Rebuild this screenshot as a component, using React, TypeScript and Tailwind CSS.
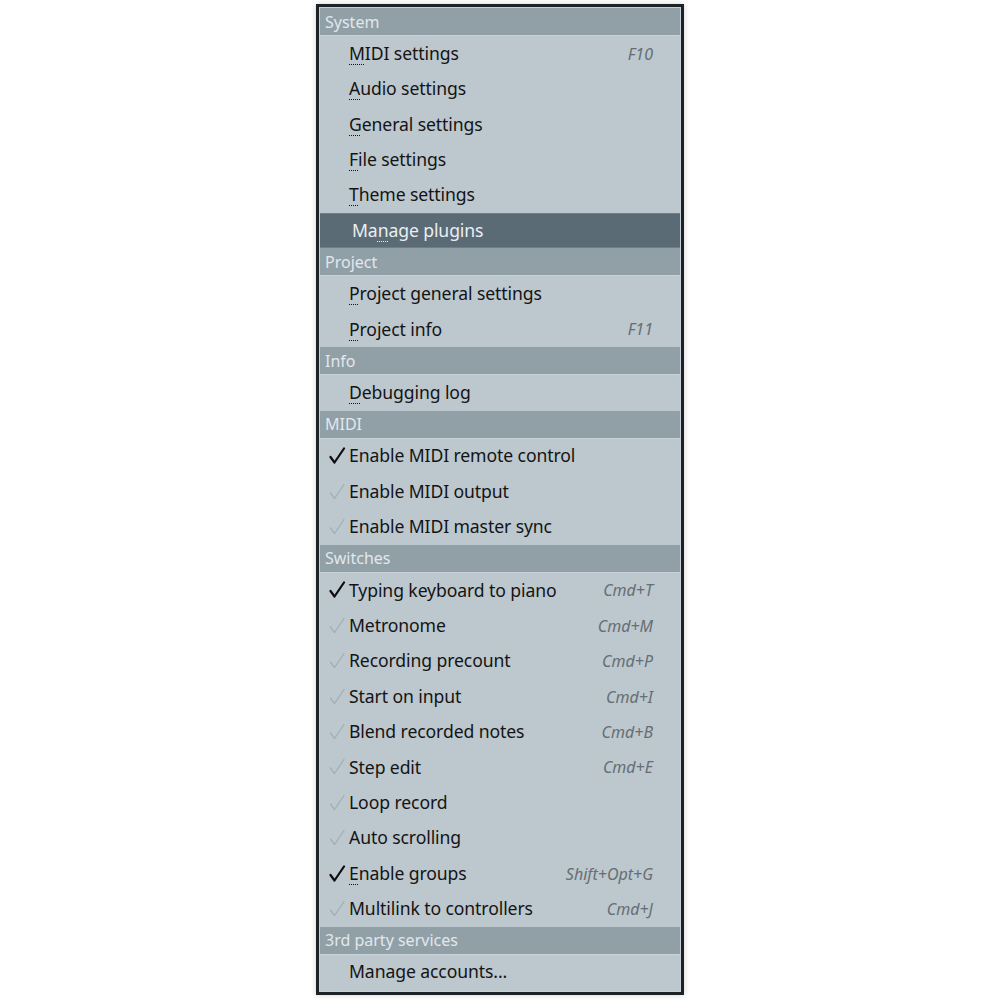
import React from 'react';

type Item = {
  label: string;
  key?: number; // index of mnemonic letter
  shortcut?: string;
  check?: 'on' | 'off';
  active?: boolean;
};

type Section = { title: string; items: Item[] };

const sections: Section[] = [
  {
    title: 'System',
    items: [
      { label: 'MIDI settings', key: 0, shortcut: 'F10' },
      { label: 'Audio settings', key: 0 },
      { label: 'General settings', key: 0 },
      { label: 'File settings', key: 0 },
      { label: 'Theme settings', key: 0 },
      { label: 'Manage plugins', key: 2, active: true },
    ],
  },
  {
    title: 'Project',
    items: [
      { label: 'Project general settings', key: 0 },
      { label: 'Project info', key: 0, shortcut: 'F11' },
    ],
  },
  { title: 'Info', items: [{ label: 'Debugging log', key: 0 }] },
  {
    title: 'MIDI',
    items: [
      { label: 'Enable MIDI remote control', check: 'on' },
      { label: 'Enable MIDI output', check: 'off' },
      { label: 'Enable MIDI master sync', check: 'off' },
    ],
  },
  {
    title: 'Switches',
    items: [
      { label: 'Typing keyboard to piano', check: 'on', shortcut: 'Cmd+T' },
      { label: 'Metronome', check: 'off', shortcut: 'Cmd+M' },
      { label: 'Recording precount', check: 'off', shortcut: 'Cmd+P' },
      { label: 'Start on input', check: 'off', shortcut: 'Cmd+I' },
      { label: 'Blend recorded notes', check: 'off', shortcut: 'Cmd+B' },
      { label: 'Step edit', check: 'off', shortcut: 'Cmd+E' },
      { label: 'Loop record', check: 'off' },
      { label: 'Auto scrolling', check: 'off' },
      { label: 'Enable groups', key: 0, check: 'on', shortcut: 'Shift+Opt+G' },
      { label: 'Multilink to controllers', check: 'off', shortcut: 'Cmd+J' },
    ],
  },
  { title: '3rd party services', items: [{ label: 'Manage accounts...' }] },
];

const Check = ({ on }: { on: boolean }) => (
  <svg width="17" height="18" viewBox="0 0 17 18" className="absolute left-[9px] top-1/2 -translate-y-1/2">
    <polyline
      points="1.5,10 5.5,15.5 15,1.5"
      fill="none"
      stroke={on ? '#0d0d0d' : '#a3aeb5'}
      strokeWidth={on ? 2.2 : 1.3}
      strokeLinecap="round"
      strokeLinejoin="round"
    />
  </svg>
);

const Label = ({ item }: { item: Item }) => {
  if (item.key === undefined) return <>{item.label}</>;
  const i = item.key;
  return (
    <>
      {item.label.slice(0, i)}
      <span className="underline decoration-dotted decoration-1 underline-offset-[4px]">{item.label[i]}</span>
      {item.label.slice(i + 1)}
    </>
  );
};

const Row = ({ item }: { item: Item }) => (
  <div
    className={`relative flex h-[35.4px] items-center text-[17.6px] ${
      item.active ? 'bg-[#5b6b75] pl-[32px] text-[#e9eff2] border-y border-[#6f7e87]' : 'pl-[29px] text-[#141414]'
    }`}
  >
    {item.check && <Check on={item.check === 'on'} />}
    <span className="flex-1 leading-none tracking-[-0.1px]">
      <Label item={item} />
    </span>
    {item.shortcut && (
      <span className="pr-[27px] text-[16px] italic text-[#666e73]">{item.shortcut}</span>
    )}
  </div>
);

export default function App() {
  return (
    <div className="min-h-[1000px] bg-white pt-[4px] pl-[316px]" style={{ fontFamily: '"Noto Sans", "Open Sans", sans-serif' }}>
      <div className="w-[368px] border-[3px] border-[#1c2226] shadow-[0_0_6px_rgba(0,0,0,0.18)]">
        <div className="border border-[#c6d0d6] bg-[#bcc7ce] pb-[1px]">
          {sections.map((s) => (
            <div key={s.title}>
              <div className="flex h-[28px] items-center border-b border-[#c9d2d8] bg-[#919fa7] pl-[5px] text-[16px] text-[#e1e8ec]">
                {s.title}
              </div>
              {s.items.map((it) => (
                <Row key={it.label} item={it} />
              ))}
            </div>
          ))}
        </div>
      </div>
    </div>
  );
}
